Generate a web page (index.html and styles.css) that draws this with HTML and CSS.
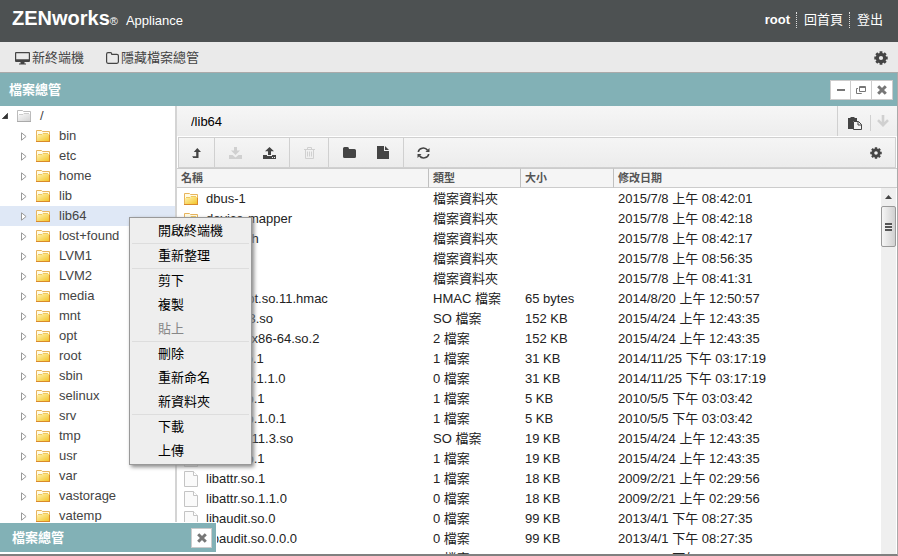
FILE: index.html
```html
<!DOCTYPE html>
<html lang="zh-Hant">
<head>
  <meta charset="UTF-8">
  <meta name="viewport" content="width=device-width, initial-scale=1.0">
  <title>ZENworks Appliance</title>
  <link rel="stylesheet" href="styles.css">
</head>
<body>
  <svg class="sprite" aria-hidden="true">
    <defs>
      <linearGradient id="gold" x1="0" y1="0" x2="1" y2="1">
        <stop offset="0" stop-color="#fff3b0"/>
        <stop offset="1" stop-color="#f3c52a"/>
      </linearGradient>
      <linearGradient id="silver" x1="0" y1="0" x2="1" y2="1">
        <stop offset="0" stop-color="#f8f8f8"/>
        <stop offset="1" stop-color="#d4d4d4"/>
      </linearGradient>
    </defs>
    <symbol id="i-desktop" viewBox="0 0 15 13">
      <path fill="currentColor" fill-rule="evenodd" d="M1 0h13a1 1 0 0 1 1 1v8a1 1 0 0 1-1 1H9.500v1.500h1.500V12.500H4V11.500h1.500V10H1a1 1 0 0 1-1-1V1a1 1 0 0 1 1-1zM1.200 1.200v6h12.600v-6z"/>
    </symbol>
    <symbol id="i-folder-o" viewBox="0 0 13 12">
      <path fill="none" stroke="currentColor" stroke-width="1.200" d="M.6 2.200Q.6.600 2 .6h2.500Q5.700.600 5.800 2.300h5.100q1.500 0 1.500 1.500v6q0 1.500-1.500 1.500H2Q.6 11.300.6 9.800z"/>
    </symbol>
    <symbol id="i-gear" viewBox="0 0 14 14">
      <circle cx="7" cy="7" r="3.700" fill="none" stroke="currentColor" stroke-width="3.200"/>
      <path stroke="currentColor" stroke-width="2.800" d="M7 .3v2M7 11.700v2M.3 7h2M11.700 7h2M2.300 2.300l1.400 1.400M10.300 10.300l1.400 1.400M2.300 11.700l1.400-1.400M10.300 3.700l1.400-1.400"/>
    </symbol>
    <symbol id="i-close" viewBox="0 0 10 10">
      <path stroke="currentColor" stroke-width="3" d="M1.200 1.200l7.600 7.600M8.800 1.200L1.200 8.800"/>
    </symbol>
    <symbol id="i-min" viewBox="0 0 10 10">
      <path fill="currentColor" d="M1 4h8v2H1z"/>
    </symbol>
    <symbol id="i-restore" viewBox="0 0 10 10">
      <path fill="none" stroke="currentColor" d="M3.500 1.500h6v5h-6zM2 3.500H.5v5h5V8M3 2.500h7"/>
    </symbol>
    <symbol id="i-level-up" viewBox="0 0 9 12">
      <path fill="currentColor" d="M5.300 1L9 5H6.500V11H1.200L.2 9.200h4V5H1.800z"/>
    </symbol>
    <symbol id="i-download" viewBox="0 0 13 12">
      <path fill="currentColor" d="M5 0h3v3.500h3L6.500 8 2 3.500h3zM0 8h3.500L6.500 10.500 9.500 8H13v4H0z"/>
    </symbol>
    <symbol id="i-upload" viewBox="0 0 13 12">
      <path fill="currentColor" fill-rule="evenodd" d="M6.500 0L11 4.300H8V8H5V4.300H2zM0 8h4v1h5V8h4v4H0zM9 10v1h1v-1zM11 10v1h1v-1z"/>
    </symbol>
    <symbol id="i-trash" viewBox="0 0 11 12">
      <path fill="none" stroke="currentColor" d="M0 2.500h11M3.500 2.500v-2h4v2M1.500 2.500v9h8v-9M3.500 4.500v5M5.500 4.500v5M7.500 4.500v5"/>
    </symbol>
    <symbol id="i-folder" viewBox="0 0 13 11">
      <path fill="currentColor" d="M0 1.500Q0 0 1.500 0h3Q6 0 6 2h5.500Q13 2 13 3.500v6q0 1.500-1.500 1.500h-10Q0 11 0 9.500z"/>
    </symbol>
    <symbol id="i-file" viewBox="0 0 12 13">
      <path fill="currentColor" d="M0 0h7v5h5v8H0zM8 0l4 4H8z"/>
    </symbol>
    <symbol id="i-refresh" viewBox="0 0 13 12">
      <path fill="none" stroke="currentColor" stroke-width="1.600" d="M1.300 5A5 4.500 0 0 1 10.500 3.200M11.700 7A5 4.500 0 0 1 2.500 8.800"/>
      <path fill="currentColor" d="M12.500 1V5H8.500zM.5 11V7h4z"/>
    </symbol>
    <symbol id="i-paste" viewBox="0 0 14 13">
      <path fill="currentColor" d="M0 1h2.500V0h4v1H9v3H5v8H0z"/>
      <path fill="#f4f4f4" stroke="currentColor" d="M5.500 4.500h5l3 3v5h-8zM10 4.500v3.500h3.500"/>
    </symbol>
    <symbol id="i-down" viewBox="0 0 12 12">
      <path fill="none" stroke="currentColor" stroke-width="2.600" d="M6 0v10M1 5.200l5 5 5-5"/>
    </symbol>
    <symbol id="i-dir" viewBox="0 0 14 12">
      <path fill="#fffbe4" stroke="#e8b45c" d="M.5 11.500V.5h5l1 1h7v10z"/>
      <path fill="url(#gold)" d="M1 11V5h5l1-1h6v7z"/>
      <path fill="none" stroke="#f0c860" d="M2 4.500h4l1-1h5"/>
      <path stroke="#d98a2b" d="M0 11.500h14M13.500 5v7"/>
    </symbol>
    <symbol id="i-root" viewBox="0 0 14 12">
      <path fill="#fff" stroke="#bbb" d="M.5 11.500V.5h5l1 1h7v10z"/>
      <path fill="url(#silver)" d="M1 11V5h5l1-1h6v7z"/>
      <path fill="none" stroke="#ccc" d="M2 4.500h4l1-1h5"/>
      <path stroke="#aaa" d="M0 11.500h14"/>
    </symbol>
    <symbol id="i-doc" viewBox="0 0 14 16">
      <path fill="#fafafa" stroke="#c4c4c4" d="M.5.500h9l4 4v11H.5z"/>
      <path fill="#fff" stroke="#c4c4c4" d="M9.500.500v4h4"/>
    </symbol>
    <symbol id="i-closed" viewBox="0 0 6 9">
      <path fill="#fff" stroke="#999" d="M.5.800v7.400l4.600-3.700z"/>
    </symbol>
    <symbol id="i-open" viewBox="0 0 6 6">
      <path fill="#333" stroke="#111" stroke-width=".5" d="M5.700.300v5.400H.3z"/>
    </symbol>
  </svg>

  <header class="banner">
    <div class="brand"><strong>ZENworks</strong><sub>®</sub><span>Appliance</span></div>
    <nav class="user-links">
      <b>root</b>
      <a href="#">回首頁</a>
      <a href="#">登出</a>
    </nav>
  </header>

  <div class="main-bar">
    <button type="button"><svg width="15" height="13"><use href="#i-desktop"/></svg>新終端機</button>
    <button type="button"><svg width="13" height="12"><use href="#i-folder-o"/></svg>隱藏檔案總管</button>
    <button type="button" class="settings" aria-label="設定"><svg width="14" height="14"><use href="#i-gear"/></svg></button>
  </div>

  <section class="window">
    <div class="title-bar">
      <h2>檔案總管</h2>
      <div class="window-buttons">
        <button type="button" aria-label="最小化"><svg width="10" height="10"><use href="#i-min"/></svg></button>
        <button type="button" aria-label="還原"><svg width="10" height="10"><use href="#i-restore"/></svg></button>
        <button type="button" aria-label="關閉"><svg width="10" height="10"><use href="#i-close"/></svg></button>
      </div>
    </div>

    <div class="panes">
      <ul class="tree" id="tree">
        <li class="root"><svg width="6" height="6"><use href="#i-open"/></svg><svg width="14" height="12"><use href="#i-root"/></svg>/</li>
      </ul>

      <div class="files">
        <div class="path-bar">
          <input type="text" value="/lib64" aria-label="路徑">
          <div class="path-tools">
            <button type="button" aria-label="貼上"><svg width="14" height="13"><use href="#i-paste"/></svg></button>
            <button type="button" aria-label="移至" disabled><svg width="12" height="12"><use href="#i-down"/></svg></button>
          </div>
        </div>

        <div class="tool-bar">
          <div class="group"><button type="button" aria-label="上一層"><svg width="9" height="12"><use href="#i-level-up"/></svg></button></div>
          <div class="group pair">
            <button type="button" aria-label="下載" disabled><svg width="13" height="12"><use href="#i-download"/></svg></button>
            <button type="button" aria-label="上傳"><svg width="13" height="12"><use href="#i-upload"/></svg></button>
          </div>
          <div class="group"><button type="button" aria-label="刪除" disabled><svg width="11" height="12"><use href="#i-trash"/></svg></button></div>
          <div class="group pair">
            <button type="button" aria-label="新資料夾"><svg width="13" height="11"><use href="#i-folder"/></svg></button>
            <button type="button" aria-label="新檔案"><svg width="12" height="13"><use href="#i-file"/></svg></button>
          </div>
          <div class="group"><button type="button" aria-label="重新整理"><svg width="13" height="12"><use href="#i-refresh"/></svg></button></div>
          <button type="button" class="settings" aria-label="選項"><svg width="12" height="12"><use href="#i-gear"/></svg></button>
        </div>

        <div class="list">
          <table id="files">
            <thead>
              <tr><th class="name">名稱</th><th class="type">類型</th><th class="size">大小</th><th>修改日期</th></tr>
            </thead>
            <tbody></tbody>
          </table>
          <div class="scrollbar"><div class="arrow"></div><div class="thumb"></div></div>
        </div>
      </div>
    </div>

    <div class="minimized">
      <h2>檔案總管</h2>
      <button type="button" aria-label="關閉"><svg width="10" height="10"><use href="#i-close"/></svg></button>
    </div>
  </section>

  <div class="context-menu" role="menu">
    <button type="button">開啟終端機</button>
    <hr>
    <button type="button">重新整理</button>
    <hr>
    <button type="button">剪下</button>
    <button type="button">複製</button>
    <button type="button" disabled>貼上</button>
    <hr>
    <button type="button">刪除</button>
    <button type="button">重新命名</button>
    <button type="button">新資料夾</button>
    <hr>
    <button type="button">下載</button>
    <button type="button">上傳</button>
  </div>

  <script>
    const folders = ['bin', 'etc', 'home', 'lib', 'lib64', 'lost+found', 'LVM1', 'LVM2', 'media', 'mnt',
      'opt', 'root', 'sbin', 'selinux', 'srv', 'tmp', 'usr', 'var', 'vastorage', 'vatemp'];

    const files = [
      ['dbus-1', '檔案資料夾', '', '2015/7/8 上午 08:42:01'],
      ['device-mapper', '檔案資料夾', '', '2015/7/8 上午 08:42:18'],
      ['multipath', '檔案資料夾', '', '2015/7/8 上午 08:42:17'],
      ['security', '檔案資料夾', '', '2015/7/8 上午 08:56:35'],
      ['tls', '檔案資料夾', '', '2015/7/8 上午 08:41:31'],
      ['.libgcrypt.so.11.hmac', 'HMAC 檔案', '65 bytes', '2014/8/20 上午 12:50:57'],
      ['ld-2.11.3.so', 'SO 檔案', '152 KB', '2015/4/24 上午 12:43:35'],
      ['ld-linux-x86-64.so.2', '2 檔案', '152 KB', '2015/4/24 上午 12:43:35'],
      ['libacl.so.1', '1 檔案', '31 KB', '2014/11/25 下午 03:17:19'],
      ['libacl.so.1.1.0', '0 檔案', '31 KB', '2014/11/25 下午 03:17:19'],
      ['libaio.so.1', '1 檔案', '5 KB', '2010/5/5 下午 03:03:42'],
      ['libaio.so.1.0.1', '1 檔案', '5 KB', '2010/5/5 下午 03:03:42'],
      ['libanl-2.11.3.so', 'SO 檔案', '19 KB', '2015/4/24 上午 12:43:35'],
      ['libanl.so.1', '1 檔案', '19 KB', '2015/4/24 上午 12:43:35'],
      ['libattr.so.1', '1 檔案', '18 KB', '2009/2/21 上午 02:29:56'],
      ['libattr.so.1.1.0', '0 檔案', '18 KB', '2009/2/21 上午 02:29:56'],
      ['libaudit.so.0', '0 檔案', '99 KB', '2013/4/1 下午 08:27:35'],
      ['libaudit.so.0.0.0', '0 檔案', '99 KB', '2013/4/1 下午 08:27:35'],
      ['libauparse.so.0', '0 檔案', '59 KB', '2013/4/1 下午 08:27:38']
    ];

    const icon = (id, w, h) => `<svg width="${w}" height="${h}"><use href="#${id}"/></svg>`;

    const tree = document.getElementById('tree');
    folders.forEach(name => {
      const li = document.createElement('li');
      if (name === 'lib64') li.classList.add('selected');
      li.innerHTML = icon('i-closed', 6, 9) + icon('i-dir', 14, 12) + name;
      tree.appendChild(li);
    });

    const tbody = document.querySelector('#files tbody');
    files.forEach(cols => {
      const tr = document.createElement('tr');
      cols.forEach((col, i) => {
        const td = document.createElement('td');
        if (i === 0) {
          const isDir = cols[1] === '檔案資料夾';
          td.innerHTML = `<div class="entry">${isDir ? icon('i-dir', 14, 12) : icon('i-doc', 14, 16)}<span>${col}</span></div>`;
        } else {
          td.textContent = col;
        }
        tr.appendChild(td);
      });
      tbody.appendChild(tr);
    });
  </script>
</body>
</html>
```
FILE: styles.css
```css
* {
  box-sizing: border-box;
}

body {
  font-family: "Liberation Sans", "Noto Sans CJK TC", sans-serif;
  font-size: 13px;
  line-height: 20px;
  color: #222;
  background: #fff;
  margin: 0;
  height: 100vh;
  display: flex;
  flex-direction: column;
  overflow: hidden;
}

button, input {
  font: inherit;
  color: inherit;
  background: none;
  border: 0;
  margin: 0;
  padding: 0;
}

button {
  display: flex;
  align-items: center;
}

svg {
  display: block;
  flex: none;
}

h2 {
  font-size: 13px;
  margin: 0;
}

.sprite {
  position: absolute;
  width: 0;
  height: 0;
}

/* header */

.banner {
  flex: none;
  display: flex;
  justify-content: space-between;
  align-items: center;
  height: 42px;
  padding: 0 15px 3px 12px;
  background: #4d5152;
  color: #fff;
}

.brand {
  display: flex;
  align-items: baseline;
}

.brand strong {
  font-size: 20px;
}

.brand sub {
  font-size: 11px;
  line-height: 10px;
  vertical-align: baseline;
}

.brand span {
  margin-left: 8px;
}

.user-links {
  display: flex;
  line-height: 16px;
}

.user-links a {
  color: #fff;
  text-decoration: none;
  margin-left: 6px;
  padding-left: 7px;
  border-left: 1px dotted #ddd;
}

.main-bar {
  flex: none;
  display: flex;
  gap: 22px;
  height: 31px;
  padding: 2px 10px 0 15px;
  background: #eaeaea;
  border-bottom: 1px solid #aaa;
  color: #444;
}

.main-bar button {
  gap: 2px;
}

.main-bar .settings {
  margin-left: auto;
}

/* file manager window */

.window {
  position: relative;
  flex: 1;
  min-height: 0;
  display: flex;
  flex-direction: column;
  border-right: 1px solid #aaa;
  border-bottom: 2px solid #808080;
}

.title-bar {
  flex: none;
  display: flex;
  justify-content: space-between;
  align-items: center;
  height: 33px;
  padding: 0 4px 0 9px;
  background: #82b1b6;
  color: #fff;
}

.window-buttons {
  display: flex;
}

.window-buttons button, .minimized button {
  justify-content: center;
  width: 21px;
  height: 20px;
  background: #fff;
  border: 1px solid #ccc;
  color: #777;
}

.window-buttons button + button {
  border-left: 0;
}

.panes {
  flex: 1;
  min-height: 0;
  display: flex;
}

.tree {
  flex: none;
  width: 177px;
  margin: 0;
  padding: 0;
  list-style: none;
  overflow: hidden;
  border-right: 2px solid #d4d4d4;
  color: #444;
}

.tree li {
  display: flex;
  align-items: center;
  gap: 9px;
  height: 20px;
  padding-left: 21px;
}

.tree .root {
  padding-left: 2px;
}

.tree .selected {
  background: #dfe8f6;
}

.files {
  flex: 1;
  min-width: 0;
  display: flex;
  flex-direction: column;
}

.path-bar {
  flex: none;
  display: flex;
  height: 30px;
  background: linear-gradient(#f6f6f6, #ededed);
}

.path-bar input {
  flex: 1;
  padding: 1px 0 0 14px;
  color: #000;
}

.path-tools {
  display: flex;
  align-items: center;
  padding: 4px 8px 0 10px;
  border-left: 1px solid #d0d0d0;
  color: #444;
}

.path-tools button + button {
  margin-left: 8px;
  padding: 0 0 4px 6px;
  height: 16px;
  border-left: 1px solid #d0d0d0;
}

button:disabled {
  color: #d0d0d0;
}

.tool-bar {
  flex: none;
  display: flex;
  height: 31px;
  margin: 1px 1px 0;
  background: linear-gradient(#f5f5f5, #ececec);
  border: 1px solid #d0d0d0;
  color: #444;
}

.group {
  display: flex;
  padding: 0 2px;
  border-right: 1px solid #d0d0d0;
}

.group:first-child {
  padding: 0 1px 0 0;
}

.group:nth-last-child(2) {
  border-right: 0;
}

.pair {
  padding: 0 3px;
}

.group button {
  justify-content: center;
  width: 34px;
}

.tool-bar .settings {
  margin-left: auto;
  padding-right: 13px;
}

.list {
  position: relative;
  flex: 1;
  min-height: 0;
  overflow: hidden;
}

table {
  width: 100%;
  table-layout: fixed;
  border-collapse: separate;
  border-spacing: 0;
}

th {
  height: 20px;
  padding: 0 4px;
  font-size: 11px;
  line-height: 18px;
  text-align: left;
  color: #555;
  background: #f5f5f5;
  border-top: 1px solid #ccc;
  border-bottom: 1px solid #ccc;
}

th + th {
  border-left: 1px solid #c0c0c0;
}

.name {
  width: 251px;
}

.type {
  width: 92px;
}

.size {
  width: 93px;
}

td {
  height: 20px;
  padding: 1px 5px 0;
  line-height: 19px;
  white-space: nowrap;
}

.entry {
  display: flex;
  align-items: center;
  height: 19px;
}

.entry svg {
  margin: 0 8px 0 2px;
}

.scrollbar {
  position: absolute;
  top: 20px;
  right: 1px;
  bottom: 0;
  width: 15px;
  background: #efefef;
}

.arrow {
  width: 7px;
  height: 4px;
  margin: 7px auto;
  background: #444;
  clip-path: polygon(50% 0, 100% 100%, 0 100%);
}

.thumb {
  display: flex;
  height: 41px;
  border: 1px solid #999;
  border-radius: 2px;
  background: linear-gradient(90deg, #f6f6f6, #d0d0d0);
}

.thumb::after {
  content: "";
  width: 7px;
  height: 8px;
  margin: auto;
  background: repeating-linear-gradient(#555 0 2px, #eee 2px 3px);
}

.minimized {
  position: absolute;
  left: 0;
  bottom: 0;
  display: flex;
  justify-content: space-between;
  align-items: center;
  width: 217px;
  height: 32px;
  padding: 0 4px 0 12px;
  background: #82b1b6;
  border: solid #fff;
  border-width: 1px 1px 2px 0;
  color: #fff;
}

/* right click menu on the selected folder */

.context-menu {
  position: absolute;
  left: 129px;
  top: 217px;
  width: 123px;
  padding: 1px 2px;
  background: #eee;
  border: 1px solid #999;
  box-shadow: 2px 2px 4px #888;
  color: #000;
}

.context-menu button {
  width: 100%;
  height: 24px;
  padding-left: 26px;
}

.context-menu button:disabled {
  color: #888;
}

.context-menu hr {
  height: 1px;
  margin: 0;
  border: 0;
  background: #ddd;
}
```
